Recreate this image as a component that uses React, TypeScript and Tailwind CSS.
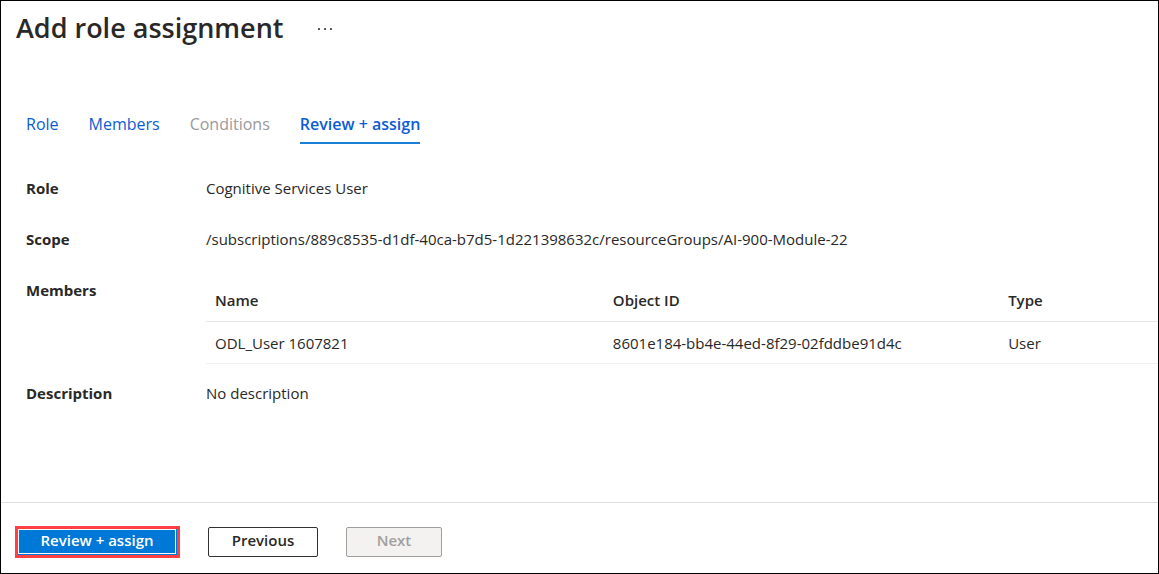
import type { ReactNode } from "react";

const tabs = [
  { label: "Role", state: "link" },
  { label: "Members", state: "link" },
  { label: "Conditions", state: "disabled" },
  { label: "Review + assign", state: "active" },
];

const tabStyles: Record<string, string> = {
  link: "border-transparent text-[#0b5cd6]",
  disabled: "border-transparent text-[#9a9a9a]",
  active: "border-[#1a7fd6] font-semibold text-[#0b5cd6]",
};

const members = [
  { name: "ODL_User 1607821", id: "8601e184-bb4e-44ed-8f29-02fddbe91d4c", type: "User" },
];

function Detail({ label, children }: { label: string; children: ReactNode }) {
  return (
    <div className="flex">
      <dt className="w-[180px] shrink-0 font-bold">{label}</dt>
      <dd className="min-w-0 grow">{children}</dd>
    </div>
  );
}

export default function App() {
  return (
    <div className="flex min-h-screen flex-col border border-black bg-white font-['Open_Sans','Noto_Sans',sans-serif] text-[15px] leading-5 text-[#292827]">
      <header className="flex items-center gap-8 px-[15px] pt-[7px]">
        <h1 className="text-[27px] leading-10 font-semibold">Add role assignment</h1>
        <button type="button" aria-label="More options" className="p-[3px] pt-[5px]">
          <svg width="14" height="4" viewBox="0 0 14 4" fill="#605e5c" aria-hidden="true">
            <rect x="0" y="1" width="2" height="2" />
            <rect x="6" y="1" width="2" height="2" />
            <rect x="12" y="1" width="2" height="2" />
          </svg>
        </button>
      </header>

      <main className="grow pt-[62px] pb-10 pl-[25px]">
        <div role="tablist" className="flex gap-[30px] text-base">
          {tabs.map((tab) => (
            <button
              key={tab.label}
              type="button"
              role="tab"
              aria-selected={tab.state === "active"}
              disabled={tab.state === "disabled"}
              className={`border-b-2 pb-1 leading-7 ${tabStyles[tab.state]}`}
            >
              {tab.label}
            </button>
          ))}
        </div>

        <dl className="flex flex-col gap-[31px] pt-[34px]">
          <Detail label="Role">Cognitive Services User</Detail>
          <Detail label="Scope">
            /subscriptions/889c8535-d1df-40ca-b7d5-1d221398632c/resourceGroups/AI-900-Module-22
          </Detail>
          <Detail label="Members">
            <table className="-mb-3 w-full table-fixed text-left">
              <thead>
                <tr className="border-b border-[#e6e6e6]">
                  <th className="w-[42%] pt-[10px] pb-[11px] pl-[9px] font-semibold">Name</th>
                  <th className="w-[41%] pt-[10px] pb-[11px] pl-[7px] font-semibold">Object ID</th>
                  <th className="pt-[10px] pb-[11px] pl-3 font-semibold">Type</th>
                </tr>
              </thead>
              <tbody>
                {members.map((member) => (
                  <tr key={member.id} className="border-b border-[#f0efee]">
                    <td className="pt-[11px] pb-[10px] pl-[9px]">{member.name}</td>
                    <td className="pt-[11px] pb-[10px] pl-[7px]">{member.id}</td>
                    <td className="pt-[11px] pb-[10px] pl-3">{member.type}</td>
                  </tr>
                ))}
              </tbody>
            </table>
          </Detail>
          <Detail label="Description">No description</Detail>
        </dl>
      </main>

      <footer className="flex items-center gap-7 border-t border-[#dcdcdc] px-[14px] pt-[23px] pb-[15px] font-semibold">
        <button
          type="button"
          className="flex h-8 w-[165px] border-[3px] border-[#ff4043] bg-[#0078d7] pr-px pb-px text-white"
        >
          <span className="grow border border-white pb-[3px] leading-5">Review + assign</span>
        </button>
        <button type="button" className="h-[30px] w-[110px] rounded-xs border border-[#323130] pb-1">
          Previous
        </button>
        <button
          type="button"
          disabled
          className="h-[30px] w-24 rounded-xs border border-[#a19f9d] bg-[#f3f2f1] pb-1 text-[#a19f9d]"
        >
          Next
        </button>
      </footer>
    </div>
  );
}
